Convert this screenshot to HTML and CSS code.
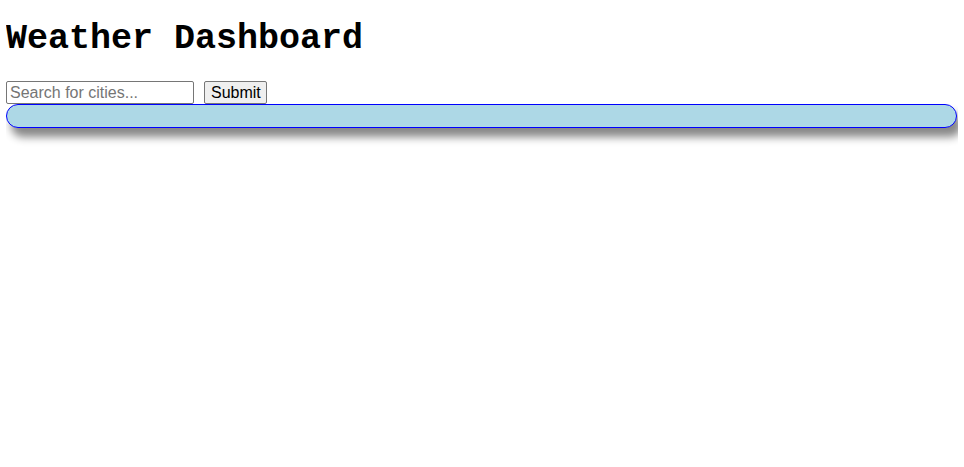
FILE: index.html
```html
<!DOCTYPE html>
<html>
<head>
<meta charset="utf-8">
<link rel="stylesheet" href="styles.css">
</head>
<body>
<h1 class="title">Weather Dashboard</h1>
<form class="search">
<input class="search-input" type="text" placeholder="Search for cities..."><button class="search-btn" type="button">Submit</button>
</form>
<div class="results"></div>
</body>
</html>
```

FILE: styles.css
```css
html, body {
  min-height: 100%;
}
body {
  margin: 6px;
  min-height: 440px;
  font-family: "Liberation Serif", serif;
}
.title {
  font-family: "Liberation Mono", monospace;
  font-size: 35px;
  font-weight: bold;
  margin: 13px 0 22px;
  line-height: 40px;
}
.search {
  display: flex;
  align-items: center;
  gap: 10px;
  margin: 0;
}
.search-input {
  width: 188px;
  height: 23px;
  box-sizing: border-box;
  font-family: "Liberation Sans", sans-serif;
  font-size: 16px;
  padding: 1px 3px;
  border: 1px solid #767676;
  border-radius: 2px;
  margin: 0;
}
.search-input::placeholder {
  color: #757575;
}
.search-btn {
  font-family: "Liberation Sans", sans-serif;
  font-size: 16px;
  height: 23px;
  padding: 0 5px 0 6px;
  border: 1px solid #767676;
  border-radius: 2px;
  background: #efefef;
  color: #000;
  margin: 0;
}
.results {
  height: 22px;
  margin-right: 1px;
  background: lightblue;
  border: 1px solid blue;
  border-radius: 12px;
  box-shadow: 5px 9px 9px #888;
}
```
